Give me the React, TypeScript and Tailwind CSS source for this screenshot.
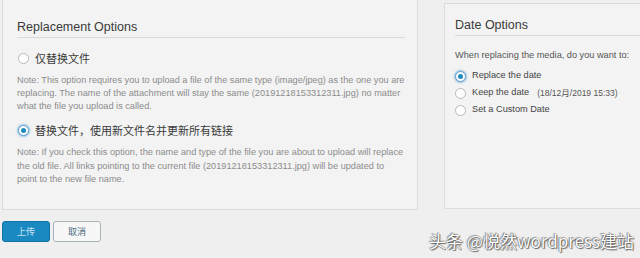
import React from "react";

const font = { fontFamily: '"Liberation Sans", Arial, "Noto Sans CJK SC", sans-serif' };

function Radio({ checked, glow }: { checked?: boolean; glow?: boolean }) {
  return (
    <span
      className={
        "relative inline-flex shrink-0 items-center justify-center rounded-full bg-white w-[11px] h-[11px] border " +
        (checked ? "border-[#5b9dd9]" : "border-[#b4b9be]") +
        (glow ? " shadow-[0_0_2px_1px_rgba(30,140,190,0.45)]" : "")
      }
    >
      {checked && <span className="block w-[5px] h-[5px] rounded-full bg-[#1e8cbe]" />}
    </span>
  );
}

export default function App() {
  return (
    <div
      className="relative w-[640px] h-[258px] overflow-hidden bg-[#efefef]"
      style={font}
    >
      <div className="flex items-start pl-[2px]">
        {/* Left panel */}
        <div className="w-[416px] h-[216px] mt-[-6px] border border-[#dcdcdc] bg-[#f3f3f3] pl-[14px] pr-[12px] pt-[24px] shrink-0">
          <div className="text-[12.5px] leading-[16px] text-[#3a3a3a] pb-[2px] border-b border-[#dadada]">
            Replacement Options
          </div>
          <div className="mt-[13px] flex items-center h-[14px] gap-[6px] pl-[1px]">
            <Radio />
            <span className="text-[11px] text-[#3a3a3a]" style={{ fontFamily: '"Noto Sans CJK SC", sans-serif' }}>
              仅替换文件
            </span>
          </div>
          <p className="mt-[8.5px] text-[9.2px] leading-[13px] text-[#8c8c8c]">
            Note: This option requires you to upload a file of the same type (image/jpeg) as the one you are
            replacing. The name of the attachment will stay the same (20191218153312311.jpg) no matter
            what the file you upload is called.
          </p>
          <div className="mt-[10.5px] flex items-center h-[14px] gap-[6px] pl-[1px]">
            <Radio checked glow />
            <span className="text-[11px] text-[#3a3a3a]" style={{ fontFamily: '"Noto Sans CJK SC", sans-serif' }}>
              替换文件，使用新文件名并更新所有链接
            </span>
          </div>
          <p className="mt-[9px] text-[9.2px] leading-[13.5px] text-[#8c8c8c]">
            Note: If you check this option, the name and type of the file you are about to upload will replace
            the old file. All links pointing to the current file (20191218153312311.jpg) will be updated to
            point to the new file name.
          </p>
        </div>

        {/* Right panel */}
        <div className="ml-[26px] w-[220px] h-[206px] mt-[3px] border border-[#dcdcdc] bg-[#f3f3f3] pl-[10px] pt-[13px] shrink-0">
          <div className="text-[12.5px] leading-[16px] text-[#3a3a3a] pb-[2px] border-b border-[#dadada]">
            Date Options
          </div>
          <p className="mt-[12.5px] text-[9.2px] leading-[13px] text-[#555]">
            When replacing the media, do you want to:
          </p>
          <div className="mt-[7.5px] flex flex-col gap-[3px]">
            <div className="flex items-center h-[14px] gap-[6px]">
              <Radio checked glow />
              <span className="text-[9.2px] text-[#444]">Replace the date</span>
            </div>
            <div className="flex items-center h-[14px] gap-[6px]">
              <Radio />
              <span className="text-[9.2px] text-[#444]">Keep the date</span>
              <span className="ml-[2px] text-[8.5px] text-[#555]">(18/12月/2019 15:33)</span>
            </div>
            <div className="flex items-center h-[14px] gap-[6px]">
              <Radio />
              <span className="text-[9.2px] text-[#444]">Set a Custom Date</span>
            </div>
          </div>
        </div>
      </div>

      {/* Buttons */}
      <div className="flex gap-[3px] pl-[2px] mt-[11px]">
        <button className="w-[48px] h-[21px] rounded-[3px] bg-[#1a89c2] border border-[#0f73a5] text-[9px] text-[#cfe6f3]" style={{ fontFamily: '"Noto Sans CJK SC", sans-serif' }}>
          上传
        </button>
        <button className="w-[48px] h-[21px] rounded-[3px] bg-[#f7f7f7] border border-[#a9b3ba] text-[9px] text-[#4a6a80]" style={{ fontFamily: '"Noto Sans CJK SC", sans-serif' }}>
          取消
        </button>
      </div>

      {/* Watermark */}
      <div
        className="absolute left-[429px] top-[229px] text-[17px] leading-[24px] text-white whitespace-nowrap"
        style={{
          fontFamily: '"Noto Sans CJK SC", sans-serif',
          textShadow:
            "0 0 1px #333, 1px 1px 1px rgba(0,0,0,0.55), -1px -1px 1px rgba(0,0,0,0.3)",
        }}
      >
        头条 @悦然wordpress建站
      </div>
    </div>
  );
}
